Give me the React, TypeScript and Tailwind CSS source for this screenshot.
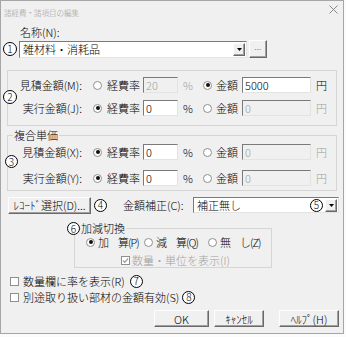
import type { ReactNode } from 'react';

const sunken = 'border border-t-[#7a7a7a] border-l-[#7a7a7a] border-b-[#e3e3e3] border-r-[#e3e3e3]';
const raised = 'border border-t-[#fdfdfd] border-l-[#fdfdfd] border-b-[#696969] border-r-[#696969] shadow-[inset_-1px_-1px_0_#a0a0a0] bg-[#f0f0f0]';

function Mark({ n, className = 'h-[13px] w-[13px]' }: { n: string; className?: string }) {
  return (
    <span className={`flex shrink-0 items-center justify-center rounded-full border border-black bg-white text-[10px] leading-none text-black ${className}`}>
      {n}
    </span>
  );
}

function Radio({ on }: { on?: boolean }) {
  return (
    <span className="flex h-[9px] w-[9px] shrink-0 items-center justify-center rounded-full border border-[#8f8f8f] bg-white">
      {on && <span className="h-[4px] w-[4px] rounded-full bg-[#111]" />}
    </span>
  );
}

function Check({ on, disabled }: { on?: boolean; disabled?: boolean }) {
  return (
    <span className="flex h-[9px] w-[9px] shrink-0 items-center justify-center border border-[#8f8f8f] bg-white">
      {on && (
        <svg width="7" height="7" viewBox="0 0 7 7">
          <path d="M1 3.5 L2.8 5.3 L6 1.5" stroke={disabled ? '#a0a0a0' : '#000'} strokeWidth="1.3" fill="none" />
        </svg>
      )}
    </span>
  );
}

function Arrow() {
  return (
    <span className={`flex h-[13px] w-[12px] shrink-0 items-center justify-center ${raised}`}>
      <svg width="5" height="3" viewBox="0 0 5 3">
        <path d="M0 0h5L2.5 3z" fill="#000" />
      </svg>
    </span>
  );
}

function Field({ value, w, disabled }: { value: string; w: string; disabled?: boolean }) {
  return (
    <div className={`flex h-[16px] shrink-0 items-center pl-[2px] ${sunken} ${disabled ? 'bg-[#f0f0f0] text-[#a0a0a0]' : 'bg-white'} ${w}`}>
      {value}
    </div>
  );
}

function Btn({ children, className }: { children: ReactNode; className: string }) {
  return (
    <div className={`flex h-[17px] shrink-0 items-center justify-center ${raised} ${className}`}>{children}</div>
  );
}

function RateRow({ label, rateOn, rate, amount }: { label: string; rateOn: boolean; rate: string; amount: string }) {
  const off = 'text-[#a0a0a0]';
  return (
    <div className="flex h-[16px] items-center">
      <span className="w-[74px] shrink-0 text-right">{label}</span>
      <div className="flex w-[61px] shrink-0 items-center gap-[5px] pl-[11px]">
        <Radio on={rateOn} />
        <span>経費率</span>
      </div>
      <Field w="w-[35px]" value={rate} disabled={!rateOn} />
      <span className={`w-[25px] shrink-0 pl-[5px] ${rateOn ? '' : off}`}>%</span>
      <div className="flex w-[39px] shrink-0 items-center gap-[4px]">
        <Radio on={!rateOn} />
        <span>金額</span>
      </div>
      <Field w="w-[69px]" value={amount} disabled={rateOn} />
      <span className={`pl-[5px] ${rateOn ? off : ''}`}>円</span>
    </div>
  );
}

export default function App() {
  return (
    <div className="relative h-[337px] w-[346px] overflow-hidden bg-[#fbfbfb] font-['Noto_Sans_CJK_JP',sans-serif] text-[11px] font-light leading-[14px] text-black">
      <div className="flex h-[334px] w-[344px] flex-col border border-[#a6a6a6] bg-[#f0f0f0]">
        {/* title bar */}
        <div className="flex h-[23px] shrink-0 items-center justify-between pl-[3px] pr-[5px]">
          <span className="text-[7.5px] text-[#9a9a9a]">諸経費・諸項目の編集</span>
          <svg width="9" height="9" viewBox="0 0 9 9" className="mb-[6px]">
            <path d="M0.5 0.5 8.5 8.5 M8.5 0.5 0.5 8.5" stroke="#8a8a8a" />
          </svg>
        </div>

        <div className="h-[16px] shrink-0 pl-[19px] leading-[16px]">名称(N):</div>

        <div className="flex h-[18px] shrink-0 items-center pl-[2px]">
          <Mark n="1" className="h-[14px] w-[14px]" />
          <div className={`ml-[2px] flex h-[17px] w-[228px] items-center bg-white pr-[1px] ${sunken}`}>
            <span className="flex-1 pl-[3px]">雑材料・消耗品</span>
            <Arrow />
          </div>
          <div className={`ml-[2px] flex h-[18px] w-[18px] items-start justify-center text-[9px] leading-[12px] text-[#555] ${raised}`}>...</div>
        </div>

        {/* 見積 / 実行 */}
        <div className="ml-[6px] mt-[12px] flex h-[56px] w-[330px] shrink-0 flex-col gap-[7px] border border-[#d5d5d5] pt-[6px]">
          <RateRow label="見積金額(M):" rateOn={false} rate="20" amount="5000" />
          <RateRow label="実行金額(J):" rateOn rate="0" amount="0" />
        </div>

        {/* 複合単価 */}
        <fieldset className="ml-[6px] mt-[2px] w-[330px] shrink-0 border border-[#d5d5d5] pb-[4px]">
          <legend className="ml-[5px] px-[1px] leading-[14px]">複合単価</legend>
          <div className="flex flex-col gap-[10px] pt-[2px]">
            <RateRow label="見積金額(X):" rateOn rate="0" amount="0" />
            <RateRow label="実行金額(Y):" rateOn rate="0" amount="0" />
          </div>
        </fieldset>

        <div className="mt-[6px] flex h-[16px] shrink-0 items-center pl-[7px]">
          <Btn className="h-[16px] w-[83px]">ﾚｺｰﾄﾞ選択(D)...</Btn>
          <Mark n="4" className="ml-[3px] h-[13px] w-[13px]" />
          <span className="ml-[16px] w-[70px] shrink-0">金額補正(C):</span>
          <div className={`flex h-[16px] w-[146px] items-center bg-white pr-[1px] ${sunken}`}>
            <span className="flex-1 pl-[3px]">補正無し</span>
            <Mark n="5" />
            <span className="ml-[2px]"><Arrow /></span>
          </div>
        </div>

        {/* 加減切換 */}
        <fieldset className="ml-[73px] mt-[9px] w-[198px] shrink-0 border border-[#d5d5d5] pb-[1px]">
          <legend className="ml-[6px] pr-[1px] leading-[13px]">加減切換</legend>
          <div className="mt-[1px] flex h-[12px] items-center pl-[11px] leading-[12px] tracking-[-1px]">
            <div className="flex w-[58px] shrink-0 items-center gap-[3px]">
              <Radio on />
              <span>加　算(P)</span>
            </div>
            <div className="flex w-[64px] shrink-0 items-center gap-[3px]">
              <Radio />
              <span>減　算(Q)</span>
            </div>
            <div className="flex items-center gap-[3px]">
              <Radio />
              <span>無　し(Z)</span>
            </div>
          </div>
          <div className="mt-[6px] flex h-[12px] items-center gap-[2px] pl-[46px] leading-[12px] text-[#a0a0a0]">
            <Check on disabled />
            <span>数量・単位を表示(I)</span>
          </div>
        </fieldset>

        <div className="mt-[6px] flex h-[14px] shrink-0 items-center pl-[9px]">
          <Check />
          <span className="ml-[4px]">数量欄に率を表示(R)</span>
          <Mark n="7" className="ml-[5px] h-[13px] w-[13px]" />
        </div>
        <div className="mt-[2px] flex h-[14px] shrink-0 items-center pl-[9px]">
          <Check />
          <span className="ml-[4px]">別途取り扱い部材の金額有効(S)</span>
          <Mark n="8" className="ml-[3px] h-[13px] w-[13px]" />
        </div>

        <div className="mt-[6px] flex h-[17px] shrink-0 pl-[153px]">
          <Btn className="w-[55px]">OK</Btn>
          <Btn className="ml-[5px] w-[50px]">ｷｬﾝｾﾙ</Btn>
          <Btn className="ml-[15px] w-[60px]">ﾍﾙﾌﾟ(H)</Btn>
        </div>
      </div>

      {/* annotation marks lying over group borders */}
      <Mark n="2" className="absolute left-[3px] top-[90px] h-[14px] w-[14px]" />
      <Mark n="3" className="absolute left-[5px] top-[155px] h-[13px] w-[13px]" />
      <Mark n="6" className="absolute left-[67px] top-[222px] h-[13px] w-[13px]" />
    </div>
  );
}
